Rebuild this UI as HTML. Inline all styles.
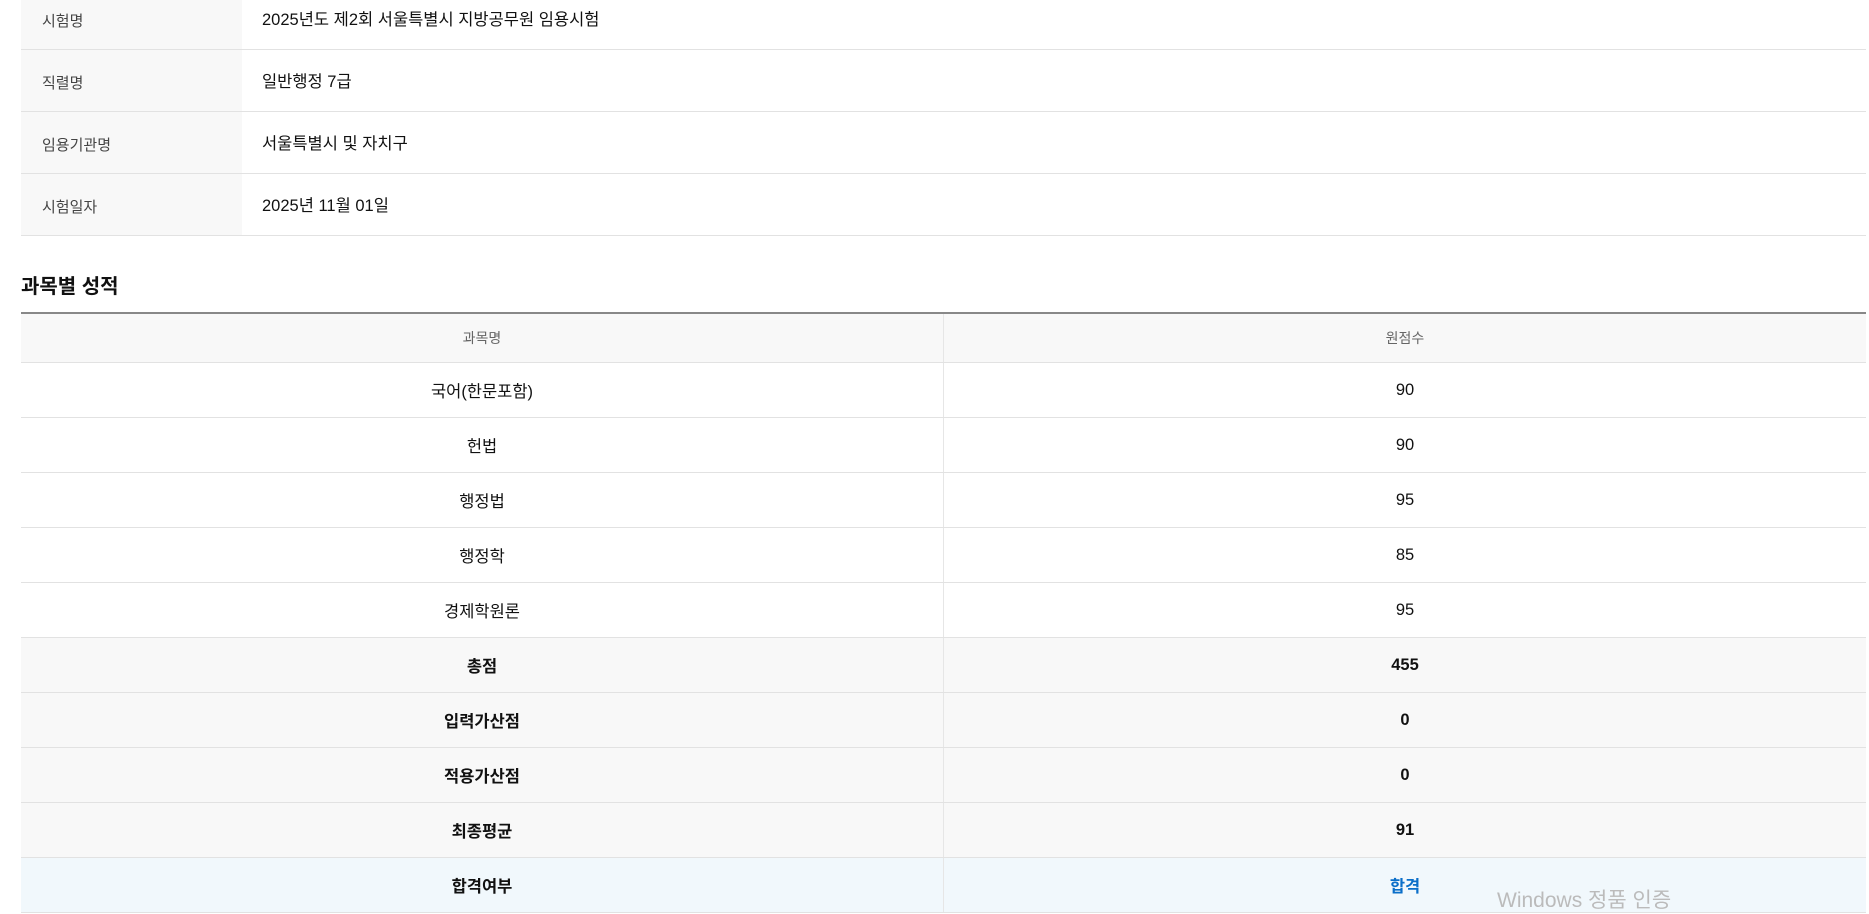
<!DOCTYPE html>
<html><head><meta charset="utf-8"><style>
body{margin:0;width:1869px;height:911px;overflow:hidden;background:#fff;font-family:"Liberation Sans","Noto Sans CJK KR",sans-serif;color:#111;position:relative}
.info{position:absolute;left:21px;top:-12px;width:1845px;border-collapse:collapse}
.info td{height:61px;border-bottom:1px solid #e2e2e2;padding:0;font-size:16.5px;vertical-align:middle}
.info td.l{width:221px;background:#f8f8f8;color:#444;font-size:15px;padding-left:21px;box-sizing:border-box}
.info td.l span{position:relative;top:2px}
.info td.v{padding-left:20px}
.info td.v span{position:relative;top:-1px}
h2{position:absolute;left:21px;top:270px;margin:0;font-size:20px;font-weight:bold}
.sc{position:absolute;left:21px;top:312px;width:1845px;border-collapse:collapse;border-top:2px solid #888}
.sc td,.sc th{border-bottom:1px solid #e2e2e2;text-align:center;font-size:16.5px;height:54px;padding:0}
.sc th{font-weight:normal;color:#666;font-size:14px;background:#f8f8f8;height:48px}
.sc td:first-child,.sc th:first-child{border-right:1px solid #e6e6e6;width:922px}
.sc tr.b td{background:#f8f8f8;font-weight:bold}
.sc tr.p td{background:#f1f8fc;font-weight:bold}
.blue{color:#0b6fc9}
.wm{position:absolute;left:1497px;top:884px;font-size:21px;color:#bbb}
</style></head><body>
<table class="info">
<tr><td class="l"><span>시험명</span></td><td class="v"><span>2025년도 제2회 서울특별시 지방공무원 임용시험</span></td></tr>
<tr><td class="l"><span>직렬명</span></td><td class="v"><span>일반행정 7급</span></td></tr>
<tr><td class="l"><span>임용기관명</span></td><td class="v"><span>서울특별시 및 자치구</span></td></tr>
<tr><td class="l"><span>시험일자</span></td><td class="v"><span>2025년 11월 01일</span></td></tr>
</table>
<h2>과목별 성적</h2>
<table class="sc">
<tr><th>과목명</th><th>원점수</th></tr>
<tr><td>국어(한문포함)</td><td>90</td></tr>
<tr><td>헌법</td><td>90</td></tr>
<tr><td>행정법</td><td>95</td></tr>
<tr><td>행정학</td><td>85</td></tr>
<tr><td>경제학원론</td><td>95</td></tr>
<tr class="b"><td>총점</td><td>455</td></tr>
<tr class="b"><td>입력가산점</td><td>0</td></tr>
<tr class="b"><td>적용가산점</td><td>0</td></tr>
<tr class="b"><td>최종평균</td><td>91</td></tr>
<tr class="p"><td>합격여부</td><td class="blue">합격</td></tr>
</table>
<div class="wm">Windows 정품 인증</div>
</body></html>
